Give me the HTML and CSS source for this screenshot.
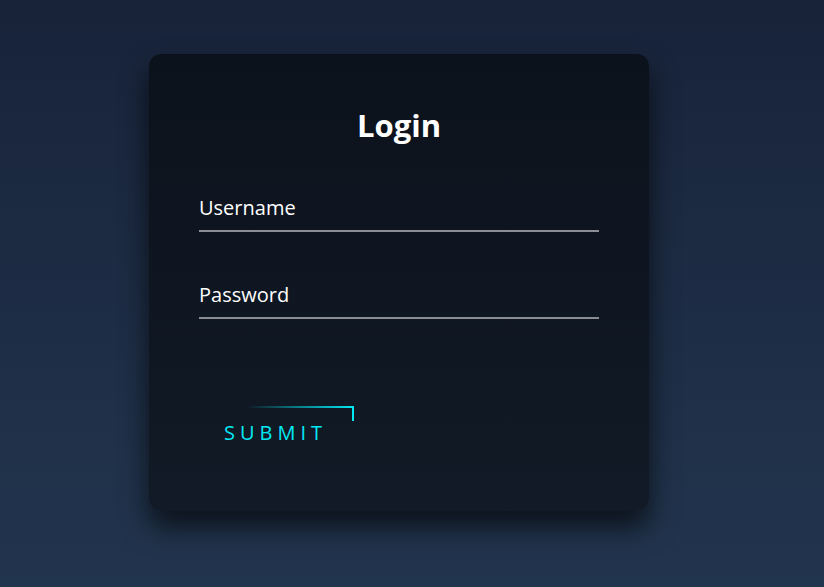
FILE: index.html
```html
<!DOCTYPE html>
<html lang="en">
<head>
    <meta charset="UTF-8">
    <meta name="viewport" content="width=device-width, initial-scale=1.0">
    <title>Login</title>
    <link rel="stylesheet" href="styles.css">
</head>
<body>

    <div class="login-box">
        <h2>Login</h2>
        <form>
            <div class="user-box">
                <span class="user-label">Username</span>
            </div>
            <div class="user-box">
                <span class="user-label">Password</span>
            </div>
            <a class="submit-btn" href="#">
                <span class="line line-top"></span>
                <span class="line line-right"></span>
                SUBMIT
            </a>
        </form>
    </div>

</body>
</html>
```

FILE: styles.css
```css
/* colours */
:root {
    --page-top: #18233a;
    --page-bottom: #22354e;
    --card-top: #0c121c;
    --card-bottom: #111a26;
    --line-color: #8b8e95;
    --accent: #03e9f4;
    --font-family: "Open Sans", "Noto Sans", Arial, sans-serif;
}

* {
    margin: 0;
    padding: 0;
    box-sizing: border-box;
}

body {
    font-family: var(--font-family);
    min-height: 100vh;
    background: linear-gradient(180deg, var(--page-top), var(--page-bottom));
    display: flex;
    justify-content: center;
    align-items: flex-start;
    padding: 54px 26px 0 0;
}

/* card */
.login-box {
    width: 500px;
    height: 457px;
    padding: 50px 50px 0;
    background: linear-gradient(180deg, var(--card-top), var(--card-bottom));
    border-radius: 12px;
    box-shadow: 0 16px 28px rgba(0, 0, 0, 0.65);
}

.login-box h2 {
    color: #fff;
    text-align: center;
    font-size: 31px;
    font-weight: 700;
    line-height: 42px;
    margin-bottom: 48px;
}

/* fields */
.user-box {
    border-bottom: 2px solid var(--line-color);
    padding-bottom: 8px;
    margin-bottom: 49px;
}

.user-label {
    display: block;
    color: #fff;
    font-size: 20px;
    line-height: 28px;
}

/* submit button with border lines */
.submit-btn {
    position: relative;
    display: inline-block;
    width: 150px;
    margin-left: 5px;
    margin-top: 38px;
    padding: 14px 20px 12px;
    color: var(--accent);
    font-size: 20px;
    line-height: 26px;
    letter-spacing: 5px;
    text-decoration: none;
    overflow: hidden;
}

.line {
    position: absolute;
    display: block;
}

.line-top {
    top: 0;
    left: 0;
    width: 100%;
    height: 2px;
    background: linear-gradient(90deg, transparent 28%, var(--accent));
}

.line-right {
    top: 0;
    right: 0;
    width: 2px;
    height: 15px;
    background: var(--accent);
}
```
